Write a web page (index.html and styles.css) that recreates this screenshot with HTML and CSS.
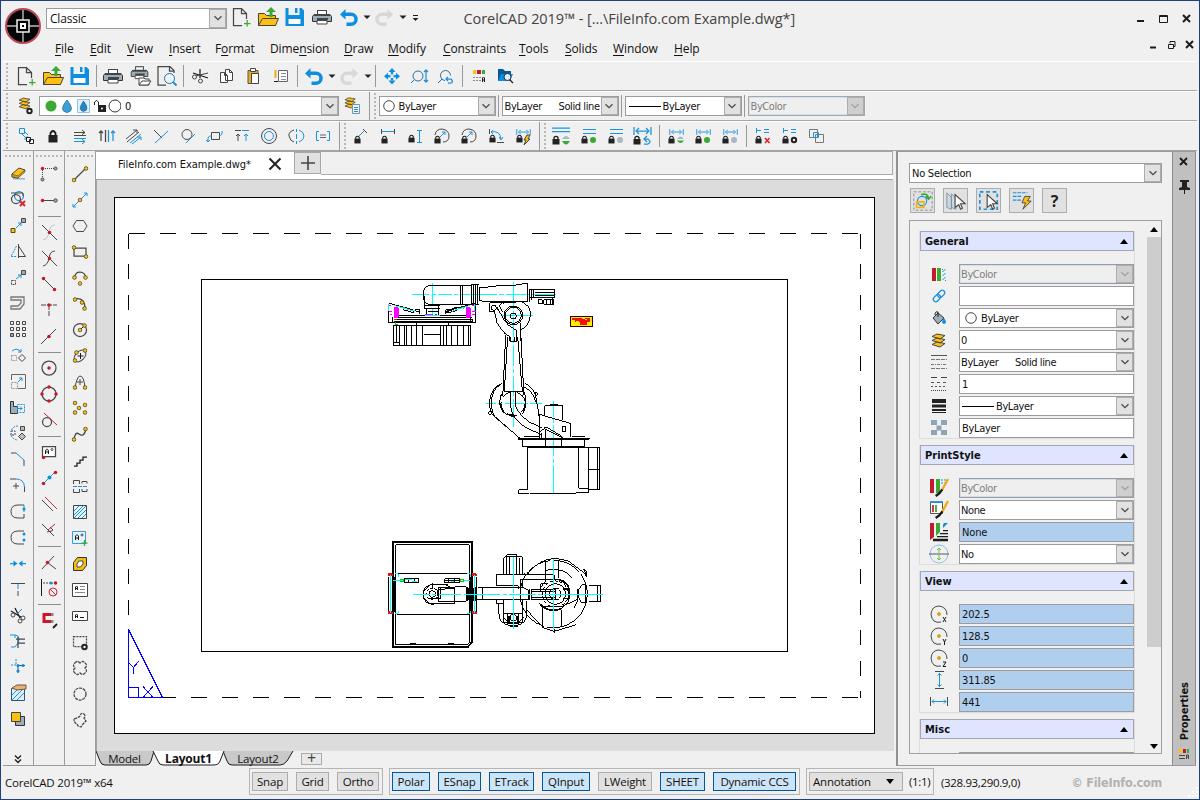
FILE: index.html
```html
<!DOCTYPE html>
<html lang="en">
<head>
<meta charset="utf-8">
<title>CorelCAD 2019</title>
<link rel="stylesheet" href="styles.css">
</head>
<body>
<svg class="defs" width="0" height="0">
<defs>
<symbol id="new" viewBox="0 0 24 24"><path class="s15" d="M13 20.500H4.500V3.500h8l5 5V14M12.500 3.500v5H18"/><path class="g s15" d="M15 18.500h6.500M18.200 15v6.500"/></symbol>
<symbol id="open" viewBox="0 0 24 24"><path class="s fy" d="M2.500 8.500h6l2 2h9v10h-17z"/><path class="fy s" d="M2.500 20.500l4-7h16l-3 7z"/><path class="fg" d="M15 2l5 5h-3.500v5h-3V7H10z"/></symbol>
<symbol id="save" viewBox="0 0 24 24"><path class="fb" d="M2.500 3h3v7h11V3h2L21 5.500V21H2.500z"/><path class="fb" d="M12 3h2.500v5H12z"/><path class="fw" d="M5.500 14h12v5h-12z"/></symbol>
<symbol id="print" viewBox="0 0 24 24"><path class="fs" d="M7 5h10v4H7z"/><path class="s fw" d="M7.500 9V5.500h9V9"/><path class="steel" d="M4 9.500h16l1.500 2v5h-19v-5z"/><path class="fs" d="M4 9h16v2H4zM7 13h11v2H7z"/><path class="fw s" d="M7 15.500h10v3.500H7z"/></symbol>
<symbol id="undo" viewBox="0 0 24 24"><path class="fb" d="M8.500 4v3.500H14a6.500 6.500 0 010 13.500H9.500v-3.500H14a3 3 0 000-6.500H8.500v3.500L3 9.500z"/></symbol>
<symbol id="redo" viewBox="0 0 24 24"><path fill="#d8d8d8" stroke="none" d="M14.500 4v3.500H9A6.500 6.500 0 009 21h4.500v-3.500H9A3 3 0 019 11h5.500v3.500l5.500-5z"/></symbol>
<symbol id="arr" viewBox="0 0 10 24"><path class="fk" d="M1.500 10.500h7L5 14z"/></symbol>
<symbol id="lock" viewBox="0 0 8 10"><path class="fk" d="M.5 4h7v5.500h-7z"/><path class="k s15" d="M2 4V2.500q2-2.500 4 0V4"/></symbol>
<symbol id="dot" viewBox="0 0 6 6"><circle class="yd" cx="3" cy="3" r="2.200"/></symbol>
<symbol id="rd" viewBox="0 0 6 6"><circle class="fr" cx="3" cy="3" r="2.100"/></symbol>
<symbol id="chev" viewBox="0 0 16 18"><path d="M4 7l4 4 4-4" stroke-width="1.400"/></symbol>
<symbol id="layers" viewBox="0 0 24 24"><path class="fy s" d="M5 16.500l5-2.500 8 1.500-5 3.500zM5 12.500l5-2.500 8 1.500-5 3.500zM5 8.500L10 6l8 1.500-5 3.500z"/></symbol>
<symbol id="dimh" viewBox="0 0 16 8"><path class="b" d="M.8 1v6M15.200 1v6M4 4h8M5 2L2.500 4 5 6M11 2l2.500 2L11 6"/></symbol>
<symbol id="pen" viewBox="0 0 20 20"><path stroke="#f5a81c" stroke-width="2.500" d="M19 1l-6 11"/><path class="k" stroke-width="2.500" d="M13 12l-3 4-4 3"/></symbol>
</defs>
</svg>

<div class="app">
<header class="top">
  <svg class="logo" viewBox="0 0 38 38"><circle cx="19" cy="19" r="17" fill="#050505" stroke="#b84a58" stroke-width="2"/><path stroke="#bbb" stroke-width="1.400" d="M19 3v10M19 25v10M3 19h10M25 19h10"/><path stroke="#eee" stroke-width="1.500" d="M13 13h12v12H13z"/><path stroke="#fff" stroke-width="2" d="M17 17h4v4h-4z"/></svg>
  <div class="topmain">
    <div class="titlebar">
      <div class="combo classic"><span>Classic</span><i><svg><use href="#chev"/></svg></i></div>
      <svg class="ic"><use href="#new"/></svg><svg class="ic"><use href="#open"/></svg><svg class="ic"><use href="#save"/></svg><svg class="ic"><use href="#print"/></svg><svg class="ic"><use href="#undo"/></svg><svg class="ar"><use href="#arr"/></svg><svg class="ic"><use href="#redo"/></svg><svg class="ar"><use href="#arr"/></svg><svg class="ic more" viewBox="0 0 24 24"><path class="k" d="M9 10.500h5"/><path class="fk" d="M8.500 13h6l-3 3z"/></svg>
      <div class="title">CorelCAD 2019™ - [...\FileInfo.com Example.dwg*]</div>
      <svg class="win" viewBox="0 0 60 24"><path class="k" stroke-width="2" d="M2 15h7M48 9l7 7M55 9l-7 7"/><path class="k" d="M24.500 9.500h8v7h-8zM24 10.500h9"/></svg>
    </div>
    <nav class="menu">
      <span class="m1"><u>F</u>ile</span><span class="m2"><u>E</u>dit</span><span class="m3"><u>V</u>iew</span><span class="m4"><u>I</u>nsert</span><span class="m5">F<u>o</u>rmat</span><span class="m6">Dime<u>n</u>sion</span><span class="m7"><u>D</u>raw</span><span class="m8"><u>M</u>odify</span><span class="m9"><u>C</u>onstraints</span><span class="m10"><u>T</u>ools</span><span class="m11"><u>S</u>olids</span><span class="m12"><u>W</u>indow</span><span class="m13"><u>H</u>elp</span>
      <svg class="win" viewBox="0 0 60 24"><path class="k" stroke-width="2" d="M13 14.500h6M49 8l7 7M56 8l-7 7"/><path class="k" d="M31.500 11.500h5v4h-5zM33 10.500V8.500h5v5h-1"/></svg>
    </nav>
  </div>
</header>

<div class="bar">
  <b class="grip"></b>
  <svg class="ic"><use href="#new"/></svg><svg class="ic"><use href="#open"/></svg><svg class="ic"><use href="#save"/></svg>
  <b class="sep"></b>
  <svg class="ic"><use href="#print"/></svg>
  <svg class="ic" viewBox="0 0 24 24"><use href="#print" x="1" y="-2" width="21" height="21"/><path class="s fw" d="M11 14h5l1 1h4v6H11z"/><path class="s fw" d="M11 21l3-4h9l-3 4z"/></svg>
  <svg class="ic" viewBox="0 0 24 24"><path class="s15" d="M11 21H3V2.500h12l4 4V9M14.500 2.500V7H19"/><circle class="nb" cx="14.500" cy="14.500" r="5" fill="#eaf4fb"/><path class="b" stroke-width="2" d="M18 18l3.500 3.500"/></svg>
  <b class="sep"></b>
  <svg class="ic" viewBox="0 0 24 24"><path class="k s15" d="M12 5v9M5 9l15 5"/><circle cx="6.500" cy="13" r="2"/><circle cx="12.500" cy="17" r="2"/><path class="s15" d="M8 12l12-3"/></svg>
  <svg class="ic" viewBox="0 0 24 24"><path class="s fw" d="M10.500 5.500h4l3 3v8h-7zM5.500 8.500h4l3 3v7h-7z"/><path d="M14.500 5.500v3h3M9.500 8.500v3h3"/></svg>
  <svg class="ic" viewBox="0 0 24 24"><path fill="#e8ae23" stroke="#555" d="M6 6.500h10v13H6z"/><path class="s fw" d="M9.500 9.500h7v10h-7zM8.500 4.500h5v3h-5z"/></svg>
  <svg class="ic" viewBox="0 0 24 24"><path class="fw" stroke="#667" d="M9.500 6.500h9v11h-9z"/><path stroke="#889" d="M12 9.500h5M12 12.500h5M12 15.500h5"/><path stroke="#f5a81c" stroke-width="2" d="M6.500 6v8"/><path class="k" d="M5 17.500h4"/></svg>
  <b class="sep"></b>
  <svg class="ic"><use href="#undo"/></svg><svg class="ar"><use href="#arr"/></svg><svg class="ic"><use href="#redo"/></svg><svg class="ar"><use href="#arr"/></svg>
  <b class="sep"></b>
  <svg class="ic" viewBox="0 0 24 24"><path class="fb" d="M12 4l3.500 4h-7zM12 20.500l3.500-4h-7zM4 12.200l4-3.500v7zM20 12.200l-4-3.500v7z"/><path class="b" stroke-width="2.500" d="M12 8v2.500M12 14v2.500M8 12.200h2.500M13.500 12.200H16"/></svg>
  <svg class="ic" viewBox="0 0 24 24"><circle class="nb" cx="11" cy="12" r="5"/><path class="nb" d="M7.500 15.500L4 19"/><path class="b s15" d="M19 7v10M17 8l2-2 2 2M17 16l2 2 2-2"/></svg>
  <svg class="ic" viewBox="0 0 24 24"><path class="nb" d="M11 16.500a5 5 0 115.500-5M8 15l-4 4"/><path class="b s15" d="M14 13l-2 2 2 2M12 15h5q3 3 0 4h-3"/></svg>
  <b class="sep"></b>
  <svg class="ic" viewBox="0 0 24 24"><path class="fy" d="M6 6h3v4H6z"/><path class="fr" d="M10 6h4v4h-4z"/><path class="fg" d="M15 6h3v4h-3z"/><path stroke="#888" stroke-dasharray="2 1" d="M6 13.500h8M6 16.500h8"/><path class="k" d="M15.500 18v-4q1-2 2 0v4M15.500 16h2"/></svg>
  <svg class="ic" viewBox="0 0 24 24"><path fill="#065a94" stroke="none" d="M4 5h5l2 2h6v10H4z"/><path class="fb" d="M4 17l3-7h12l-3 7z"/><circle cx="13.500" cy="13" r="3.500" fill="#def" stroke="#234"/><path class="k s15" d="M16 16l3 3"/></svg>
</div>

<div class="bar bar2">
  <b class="grip"></b>
  <svg class="ic" viewBox="0 0 24 24"><use href="#layers" x="0" y="-1" width="22" height="20"/><circle cx="15.500" cy="17" r="2.200" stroke="#222" stroke-width="2" fill="#fff"/></svg>
  <div class="combo layer"><span class="licons"><svg viewBox="0 0 78 20" width="78" height="20"><circle cx="8" cy="10" r="5.500" fill="#3aaa35" stroke="none"/><path fill="#3a9fd8" stroke="#4682a0" d="M24 4q9 11 0 12.500Q15 15 24 4z"/><path fill="#def0fb" stroke="#89c5ec" d="M34.500 3.500h12v13h-12z"/><path fill="#2186c4" stroke="#357" stroke-width=".6" d="M40.500 5q7 9 0 10.500Q34 14 40.500 5z"/><path d="M51.500 9V6q2-3 4 0v4" stroke="#222"/><path class="fk" d="M55 9h8v7h-8z"/><circle cx="59" cy="12.500" r="1" fill="#fff" stroke="none"/><circle cx="72" cy="10" r="6" fill="#fff" stroke="#333"/></svg></span><span>0</span><i><svg><use href="#chev"/></svg></i></div>
  <svg class="ic" viewBox="0 0 24 24"><use href="#layers" x="-1" y="-1" width="21" height="19"/><path fill="#e8f2f8" stroke="#6f97b0" d="M11.500 10.500h7v9h-7z"/><path stroke="#48a" d="M13 13.500h4M13 15.500h4M13 17.500h4"/></svg>
  <b class="sep tall"></b><b class="grip g2"></b>
  <div class="combo c117"><svg class="circ" viewBox="0 0 14 14"><circle cx="7" cy="7" r="5.300" fill="#fff"/></svg><span>ByLayer</span><i><svg><use href="#chev"/></svg></i></div><b class="sep"></b>
  <div class="combo c117"><span class="lt">ByLayer</span><span>Solid line</span><i><svg><use href="#chev"/></svg></i></div><b class="sep"></b>
  <div class="combo c117"><b class="line"></b><span>ByLayer</span><i><svg><use href="#chev"/></svg></i></div><b class="sep"></b>
  <div class="combo c117 dis"><span>ByColor</span><i><svg><use href="#chev"/></svg></i></div>
</div>

<div class="bar bar3">
  <b class="grip"></b>
  <svg class="ic" viewBox="0 0 24 24"><path class="b" d="M5.500 4.500h5v5h-5zM8 10l5 5M11 8l3 3M13 12v3h-3"/><path class="k" d="M12.500 13.500h4v4h-4zM15.500 15.500h4v4h-4z" fill="#fff"/></svg>
  <svg class="ic" viewBox="0 0 24 24"><path class="fk" d="M7.500 11h9v7.500h-9z"/><path class="k s2" d="M9.500 11V9q2.500-4 5 0v2"/></svg>
  <svg class="ic" viewBox="0 0 24 24"><path d="M6 8.500h11M14 6l3 2.500-3 2M6 11.500h12"/><path class="b" d="M6 14.500h12M6 17.500h11M14 15l3 2.500-3 2.500"/></svg>
  <svg class="ic" viewBox="0 0 24 24"><path class="s15" d="M6 17V8M4 9l2-2 2 2M10.500 6v12"/><path class="b s15" d="M13.500 6v12M18 17V8M16 9l2-2 2 2"/></svg>
  <svg class="ic" viewBox="0 0 24 24"><path d="M4 15L15 6M11 6h4v3M5 18L17 8"/><path class="b" d="M8 19l11-9M10 20l9-7M15 13h4v3"/></svg>
  <svg class="ic" viewBox="0 0 24 24"><path d="M5 6l8 8"/><path class="b" d="M6 19L19 7"/></svg>
  <svg class="ic" viewBox="0 0 24 24"><circle cx="11" cy="10.500" r="5"/><path class="b" d="M10 19l9-9"/></svg>
  <svg class="ic" viewBox="0 0 24 24"><path d="M8.500 8.500h8v7h-8z"/><path class="b" d="M5 18q-1-7 4-6M16 12q4-1 3-5M3 16l2 2 2-2"/></svg>
  <svg class="ic" viewBox="0 0 24 24"><path d="M5 6.500h6M8 17v-7M6 12l2-2 2 2"/><path class="b" d="M12 6.500h7M16 17v-7M14 12l2-2 2 2"/></svg>
  <svg class="ic" viewBox="0 0 24 24"><circle cx="12" cy="12" r="7.500"/><circle class="b" cx="12" cy="12" r="4.500"/></svg>
  <svg class="ic" viewBox="0 0 24 24"><path d="M10 6q-6 2-5 6 1 5 5 6"/><path class="b" d="M15 6q5 2 5 6t-5 6M12.500 5v3M12.500 10v5M12.500 17v3"/></svg>
  <svg class="ic" viewBox="0 0 24 24"><path class="b" d="M8 7.500H5.500v9H8M16 7.500h2.500v9H16"/><path stroke="#667" d="M9 11h6M9 13.500h6"/></svg>
  <b class="sep tall"></b><b class="grip g2"></b>
  <svg class="ic" viewBox="0 0 24 24"><use href="#lock" x="5" y="11" width="7" height="9"/><path class="b" d="M10 12l6-6"/><path d="M14 5l4 4"/></svg>
  <svg class="ic" viewBox="0 0 24 24"><use href="#lock" x="5" y="11" width="7" height="9"/><path d="M5.500 5v5M18.500 5v5"/><path class="b" d="M6 7.500h12"/></svg>
  <svg class="ic" viewBox="0 0 24 24"><use href="#lock" x="5" y="10" width="7" height="9"/><path class="b" d="M14 6.500h5M16.500 6v12M14 18.500h5"/></svg>
  <svg class="ic" viewBox="0 0 24 24"><use href="#lock" x="4" y="11" width="7" height="9"/><path d="M5 11q1-6 7-6 7 1 7 7t-6 6"/><path class="b" d="M10 13l5-5M12 8h3v3"/></svg>
  <svg class="ic" viewBox="0 0 24 24"><use href="#lock" x="4" y="11" width="7" height="9"/><path d="M5 11q1-6 7-6 7 1 7 7t-6 6"/><path class="b" d="M9 14l6-6M12 8h3v3"/></svg>
  <svg class="ic" viewBox="0 0 24 24"><use href="#lock" x="5" y="10" width="7" height="9"/><path d="M5.500 5v5M13 18.500h7"/><path class="b" d="M7 8q9-2 10 7M9 6L7 8l2 2M15 13l2 3 2-3"/></svg>
  <svg class="ic" viewBox="0 0 24 24"><use href="#dimh" x="5" y="4" width="15" height="8"/><use href="#lock" x="5" y="10" width="7" height="9"/><path class="fy s" stroke-width=".5" d="M16 11h3l-2 4h2l-6 6 2-5h-2z"/></svg>
  <b class="sep tall"></b><b class="grip g2"></b>
  <svg class="ic" viewBox="0 0 24 24"><path class="b s15" d="M2 4h18M2 7.500h18"/><use href="#lock" x="2" y="11" width="8" height="10"/><path class="fg" d="M12 17h8q-4 7-8 0"/><path fill="#a9b9c2" stroke="none" d="M12 15h8q-4-6-8 0"/></svg>
  <svg class="ic" viewBox="0 0 24 24"><path class="b" d="M6 5.500h13M6 9.500h13"/><use href="#lock" x="4" y="11" width="7" height="9"/><circle class="fg" cx="16" cy="16" r="3"/></svg>
  <svg class="ic" viewBox="0 0 24 24"><path class="b" d="M6 5.500h13M6 9.500h13"/><use href="#lock" x="4" y="11" width="7" height="9"/><circle fill="#a9b9c2" stroke="none" cx="16" cy="16" r="3"/></svg>
  <svg class="ic" viewBox="0 0 24 24"><path class="b s15" d="M3 3v8M20 3v8M6 7h11M8 4L5 7l3 3M15 4l3 3-3 3M16 12l-3 3 3 3M13 15h4q4 3 0 5h-4"/><use href="#lock" x="2" y="11" width="8" height="10"/></svg>
  <b class="sep"></b>
  <svg class="ic" viewBox="0 0 24 24"><use href="#dimh" x="5" y="4" width="15" height="8"/><use href="#lock" x="4" y="11" width="7" height="9"/><path class="fg" d="M13 16.500h7q-3.500 5-7 0"/><path fill="#a9b9c2" stroke="none" d="M13 15h7q-3.500-5-7 0"/></svg>
  <svg class="ic" viewBox="0 0 24 24"><use href="#dimh" x="5" y="4" width="15" height="8"/><use href="#lock" x="4" y="11" width="7" height="9"/><circle class="fg" cx="16" cy="16" r="3"/></svg>
  <svg class="ic" viewBox="0 0 24 24"><use href="#dimh" x="5" y="4" width="15" height="8"/><use href="#lock" x="4" y="11" width="7" height="9"/><circle fill="#a9b9c2" stroke="none" cx="16" cy="16" r="3"/></svg>
  <b class="sep"></b>
  <svg class="ic" viewBox="0 0 24 24"><path class="b" d="M5.500 4v5M5 6.500h5M13 5.500h5M13 8.500h5"/><use href="#lock" x="4" y="11" width="7" height="9"/><path stroke="#e0222c" stroke-width="1.600" d="M14 14l4.500 5M18.500 14L14 19"/></svg>
  <svg class="ic" viewBox="0 0 24 24"><path class="b" d="M5.500 4v5M5 6.500h5M13 5.500h5M13 8.500h5"/><use href="#lock" x="4" y="11" width="7" height="9"/><circle cx="16" cy="16" r="2.200" stroke="#222" stroke-width="2"/></svg>
  <svg class="ic" viewBox="0 0 24 24"><path stroke="#777" d="M4.500 5.500h8v8h-8zM10.500 10.500h8v8h-8z"/><path class="b" d="M8.500 8.500h5v5h-5z"/></svg>
</div>

<div class="main">
  <div class="tools">
    <b class="hgrip"></b>
    <svg class="tl" viewBox="0 0 24 24"><path fill="#8fb4cf" stroke="none" d="M7 17h12v1.500H7z"/><path class="fy s" d="M6 13l7-6 6 2-7 8-6-1z"/><path fill="#d89a10" stroke="#333" stroke-width=".5" d="M6 13l6 2 7-6v2l-7 6-6-1z"/></svg>
    <svg class="tl" viewBox="0 0 24 24"><circle class="b s15" cx="13" cy="9" r="4.500"/><circle class="s15" cx="10" cy="12" r="4.500"/><path d="M5 6h12v3"/><path stroke="#e0222c" stroke-width="2" d="M14 14l5 5M19 14l-5 5"/></svg>
    <svg class="tl" viewBox="0 0 24 24"><path class="yd" d="M5 15.500h4v4H5z"/><path fill="#aaa" d="M15.500 5.500h4v4h-4z"/><path class="b" d="M10 15l5-5M12 10h3v3"/></svg>
    <svg class="tl" viewBox="0 0 24 24"><path class="b" stroke-dasharray="2 1" d="M10.500 7L5 17.500h5.500"/><path d="M12.500 5v14M12.500 7l7 10.500h-7z"/></svg>
    <svg class="tl" viewBox="0 0 24 24"><path stroke-dasharray="2 1" d="M5.500 15.500h4v4h-4z"/><path fill="#aaa" d="M15.500 5.500h4v4h-4z"/><path class="b" d="M10 14l5-4M12 10h3v3"/></svg>
    <svg class="tl" viewBox="0 0 24 24"><path stroke="#777" stroke-width="1.300" d="M5 6h13v7l-4 5H5v-3h7l3-3V9H5z"/></svg>
    <svg class="tl" viewBox="0 0 24 24"><path d="M4.500 4.500h3v3h-3zM10.500 4.500h3v3h-3zM16.500 4.500h3v3h-3zM4.500 10.500h3v3h-3zM10.500 10.500h3v3h-3zM16.500 10.500h3v3h-3zM10.500 16.500h3v3h-3zM16.500 16.500h3v3h-3z"/><path fill="#9ab" d="M4.500 16.500h3v3h-3z"/></svg>
    <svg class="tl" viewBox="0 0 24 24"><path class="b" d="M6 8q5-4 9 1M15 6v3h-3"/><path stroke="#999" stroke-dasharray="2 1" d="M5.500 12.500h5v5h-5z"/><path d="M16 11.500l3.500 3.500-3.500 3.500-3.500-3.500z"/></svg>
    <svg class="tl" viewBox="0 0 24 24"><path stroke="#666" d="M5.500 11V5.500h14v14H12"/><path stroke="#999" stroke-dasharray="2 1" d="M5.500 13.500h6v6h-6z"/><path class="b" d="M12 13l4-4M13 9h3v3"/></svg>
    <svg class="tl" viewBox="0 0 24 24"><path class="steel" d="M4.500 6.500h3v5h4v7h-7z"/><path class="b" stroke-dasharray="2 1" d="M11.500 9.500h7v8h-7z"/><path class="b" d="M11 13.500h5M14 11.500l2 2-2 2"/></svg>
    <svg class="tl" viewBox="0 0 24 24"><path fill="#bbb" d="M14.500 5.500h4v4h-4zM16 12l3.500 3.500L16 19l-3.500-3.500z"/><path class="b" stroke-dasharray="2 1" d="M12 5q-5 0-7 5M5 14q2 5 7 5"/><path stroke-dasharray="2 1" d="M5 10h4v4H5z"/></svg>
    <svg class="tl" viewBox="0 0 24 24"><path d="M5 6h5M18 13v6"/><path class="b" d="M10 6l8 7"/></svg>
    <svg class="tl" viewBox="0 0 24 24"><path d="M4 6h6M18.500 14v5M10 10v6M7 13h6"/><path class="b" d="M10 6q8 0 8.500 8"/></svg>
    <svg class="tl" viewBox="0 0 24 24"><path d="M18 6h-6q-7 0-7 6.500T12 19h6v-4"/><path class="b" d="M18 6v7"/><circle class="fb" cx="18" cy="10" r="1.500"/></svg>
    <svg class="tl" viewBox="0 0 24 24"><path d="M18 6h-6q-7 0-7 6.500T12 19h6"/><circle class="fb" cx="18" cy="9" r="1.500"/><circle class="fb" cx="18" cy="15" r="1.500"/></svg>
    <svg class="tl" viewBox="0 0 24 24"><path class="b s15" d="M4 12.500h4M16 12.500h4"/><path class="fb" d="M7.500 9.500l4 3-4 3zM16.500 9.500l-4 3 4 3z"/></svg>
    <svg class="tl" viewBox="0 0 24 24"><path d="M5 6.500h14"/><path class="b" d="M12 7v5"/><path d="M12 14v5"/></svg>
    <svg class="tl" viewBox="0 0 24 24"><path class="k s15" d="M9 5l5 10M5 8l10 6"/><path class="b" d="M16 6l-5 5"/><circle cx="7" cy="12" r="2"/><circle cx="14" cy="18" r="2"/><circle cx="17" cy="15" r="2"/></svg>
    <svg class="tl" viewBox="0 0 24 24"><path class="b" d="M4 6h5q4 0 4 4t-4 8H5M9 6v3"/><path class="s15" d="M10 10h9M12 14h7M12 8v11"/></svg>
    <svg class="tl" viewBox="0 0 24 24"><path class="b" stroke-dasharray="2 1" d="M10 4v6H5"/><path d="M12 10.500h7M12 10v8"/><circle class="fb" cx="12" cy="10.500" r="1.600"/><circle class="fb" cx="17" cy="10.500" r="1.600"/><circle class="fb" cx="12" cy="16" r="1.600"/></svg>
    <svg class="tl" viewBox="0 0 24 24"><path fill="#ddf0fb" stroke="#356" d="M5.500 7.500h13v12h-13z"/><path class="b" d="M6 14l6-6M6 19l11-11M11 19l7-7"/><path fill="#e9b17b" stroke="#754" d="M6 7l5-3h9v4l-9 1z"/></svg>
    <svg class="tl" viewBox="0 0 24 24"><path class="steel" d="M9.500 9.500h9v9h-9z"/><path class="fy s" d="M5.500 5.500h9v9h-9z"/></svg>
    <svg class="expand" viewBox="0 0 24 24"><path class="k s15" d="M9 7.500l3 3 3-3M9 11.500l3 3 3-3"/></svg>
  </div>
  <div class="tools">
    <b class="hgrip"></b>
    <svg class="tl" viewBox="0 0 24 24"><path stroke-dasharray="1 1" d="M6 6.500h13M5.500 6v12"/><use href="#rd" x="3" y="4" width="5" height="5"/><circle fill="#aaa" cx="18.500" cy="6.500" r="1.500"/><circle fill="#aaa" cx="5.500" cy="17.500" r="1.500"/></svg>
    <svg class="tl" viewBox="0 0 24 24"><path d="M6 12.500h13"/><use href="#rd" x="3" y="10" width="5" height="5"/><circle fill="#aaa" cx="18.500" cy="12.500" r="1.700"/></svg>
    <b class="hsep"></b>
    <svg class="tl" viewBox="0 0 24 24"><path stroke="#b8c8d0" d="M18 5q-5 0-6 7t-6 8"/><path d="M5 5l15 15"/><use href="#rd" x="10" y="10" width="5" height="5"/></svg>
    <svg class="tl" viewBox="0 0 24 24"><path d="M18 5q-5 0-6 7t-6 8M5 5l15 15"/><use href="#rd" x="10" y="10" width="5" height="5"/></svg>
    <svg class="tl" viewBox="0 0 24 24"><path d="M6 6l12 12"/><use href="#rd" x="4" y="4" width="5" height="5"/><use href="#rd" x="15" y="15" width="5" height="5"/></svg>
    <svg class="tl" viewBox="0 0 24 24"><path d="M4 7h16M12 7v12" stroke-dasharray="5 1"/><use href="#rd" x="9.500" y="4.500" width="5" height="5"/></svg>
    <svg class="tl" viewBox="0 0 24 24"><path d="M4 20L19 5"/><use href="#rd" x="9.500" y="10" width="5" height="5"/></svg>
    <b class="hsep"></b>
    <svg class="tl" viewBox="0 0 24 24"><circle class="s15" cx="12" cy="12" r="7"/><use href="#rd" x="9.500" y="9.500" width="5" height="5"/></svg>
    <svg class="tl" viewBox="0 0 24 24"><circle class="s15" cx="12" cy="12" r="7"/><use href="#rd" x="9.500" y="2.500" width="5" height="5"/><use href="#rd" x="2.500" y="9.500" width="5" height="5"/><use href="#rd" x="16.500" y="9.500" width="5" height="5"/><use href="#rd" x="9.500" y="16.500" width="5" height="5"/></svg>
    <svg class="tl" viewBox="0 0 24 24"><circle class="s15" cx="10" cy="14" r="4.500"/><path class="rr" d="M7 5l13 12"/></svg>
    <b class="hsep"></b>
    <svg class="tl" viewBox="0 0 24 24"><path class="s15" d="M5.500 6.500h13v10h-13z" fill="#fff"/><path class="k" d="M8.500 14v-3q1.500-4 3 0v3M9 12h3"/><circle cx="15" cy="9.500" r="1"/><use href="#rd" x="4" y="15" width="5" height="5"/></svg>
    <svg class="tl" viewBox="0 0 24 24"><path class="b" d="M7 17L18 6"/><circle class="fb" cx="12.500" cy="11.500" r="2"/><use href="#rd" x="4" y="15" width="5" height="5"/><use href="#rd" x="16" y="4" width="5" height="5"/></svg>
    <svg class="tl" viewBox="0 0 24 24"><path d="M5 8l11 11"/><path class="rr" d="M8 5l12 12"/></svg>
    <svg class="tl" viewBox="0 0 24 24"><path d="M5 6l12 12M10 14l4-1M13 9l3 3-3 2"/><path class="rr" d="M11 12l7-6"/></svg>
    <b class="hsep"></b>
    <svg class="tl" viewBox="0 0 24 24"><path d="M17 6L5 19M11 13l8 6"/><use href="#rd" x="8" y="10" width="5" height="5"/></svg>
    <svg class="tl" viewBox="0 0 24 24"><path class="k" d="M4.500 3v17"/><path stroke-dasharray="2 1" d="M6 7h10"/><circle class="fb" cx="14" cy="7" r="1.500"/><use href="#rd" x="16" y="4.500" width="5" height="5"/><circle class="rr" cx="16" cy="16" r="4"/><path class="rr" d="M13 13l6 6"/></svg>
    <b class="hsep"></b>
    <svg class="tl" viewBox="0 0 24 24"><path stroke="#cc1526" stroke-width="3" d="M14 6.500H7v7h7"/><path stroke="#888" stroke-width="3" d="M14 6.500h2.500M14 13.500h2.500"/><path class="k s2" d="M16 20l4-4"/></svg>
  </div>
  <div class="tools t3">
    <b class="hgrip"></b>
    <svg class="tl" viewBox="0 0 24 24"><path class="s15" d="M6 18L18 6"/><use href="#dot" x="3.500" y="15.500" width="5" height="5"/><use href="#dot" x="15.500" y="4" width="5" height="5"/></svg>
    <svg class="tl" viewBox="0 0 24 24"><path class="b" d="M5 19L19 5M16 5h3v3M5 16v3h3"/><use href="#dot" x="9.500" y="9.500" width="5" height="5"/></svg>
    <svg class="tl" viewBox="0 0 24 24"><path d="M8.500 6.500h7l3.500 5.500-3.500 5.500h-7L5 12z"/></svg>
    <svg class="tl" viewBox="0 0 24 24"><path class="s15" d="M6 8h12v8H6z"/><use href="#dot" x="3.500" y="5" width="5" height="5"/><use href="#dot" x="15.500" y="14" width="5" height="5"/></svg>
    <svg class="tl" viewBox="0 0 24 24"><path class="s15" d="M7 11q0-5 5-5t6 6"/><use href="#dot" x="4" y="9" width="5" height="5"/><use href="#dot" x="15" y="9" width="5" height="5"/><use href="#dot" x="9.500" y="15" width="5" height="5"/></svg>
    <svg class="tl" viewBox="0 0 24 24"><path class="s15" d="M7 7q10-2 10 10"/><use href="#dot" x="4.500" y="5" width="5" height="5"/><use href="#dot" x="11.500" y="8" width="5" height="5"/><use href="#dot" x="14" y="14" width="5" height="5"/></svg>
    <svg class="tl" viewBox="0 0 24 24"><circle class="s15" cx="12" cy="12" r="6.500"/><path class="k" d="M12 12l5-5"/><use href="#dot" x="9.500" y="9.500" width="5" height="5"/><use href="#dot" x="14" y="5" width="5" height="5"/></svg>
    <svg class="tl" viewBox="0 0 24 24"><ellipse cx="12" cy="12" rx="7" ry="4.500" transform="rotate(-45 12 12)"/><path class="k" d="M12.500 9v6M9.500 12h6"/><use href="#dot" x="14.500" y="4" width="5" height="5"/><use href="#dot" x="6" y="6" width="5" height="5"/><use href="#dot" x="4.500" y="14" width="5" height="5"/></svg>
    <svg class="tl" viewBox="0 0 24 24"><path d="M7 18Q9 6 12 6q4 0 5 12M12 9v6M9 12h6"/><use href="#dot" x="4.500" y="15" width="5" height="5"/><use href="#dot" x="14.500" y="15" width="5" height="5"/></svg>
    <svg class="tl" viewBox="0 0 24 24"><use href="#dot" x="4.500" y="4.500" width="5" height="5"/><use href="#dot" x="14.500" y="6.500" width="5" height="5"/><use href="#dot" x="8.500" y="9.500" width="5" height="5"/><use href="#dot" x="4.500" y="14" width="5" height="5"/><use href="#dot" x="14.500" y="14" width="5" height="5"/></svg>
    <svg class="tl" viewBox="0 0 24 24"><path class="s15" d="M6 18q1-9 5-6 5 4 7-5"/><use href="#dot" x="3.500" y="15" width="5" height="5"/><use href="#dot" x="15" y="4.500" width="5" height="5"/></svg>
    <svg class="tl" viewBox="0 0 24 24"><path class="k s15" d="M6 18h3v-3h3v-3h3V9h4"/></svg>
    <svg class="tl" viewBox="0 0 24 24"><path d="M5.500 10V6.500h6V10M5.500 15v3.500h6V15M14 9.500v-2h5v2M14 15v2.500h5V15"/><path class="b" stroke-dasharray="4 1" d="M5 12.500h14"/></svg>
    <svg class="tl" viewBox="0 0 24 24"><path fill="#e6f4fc" stroke="#444" d="M5.500 5.500h13v13h-13z"/><path class="b" d="M6 11l5-5M6 15l9-9M6 18L18 6M10 18l8-8M14 18l4-4"/></svg>
    <svg class="tl" viewBox="0 0 24 24"><path fill="#e6f4fc" stroke="#3a9fd8" d="M4.500 5.500h13v12h-13z"/><path class="k" d="M7.500 14v-4q1.500-3 3 0v4M8 12h2"/><circle cx="14" cy="9" r="1"/><path class="g s15" d="M13.500 17h6M16.500 14v6"/></svg>
    <svg class="tl" viewBox="0 0 24 24"><path fill="#f5bd12" stroke="#333" d="M9.500 5.500h9v8l-4 5h-9v-8z"/><path fill="#fff" d="M11 9h4v3l-2.500 3H9v-3z"/></svg>
    <svg class="tl" viewBox="0 0 24 24"><path class="s fw" d="M4.500 5.500h15v13h-15z"/><path class="k" d="M7.500 12V9q1-2 2 0v3M7.500 10.500h2"/><path stroke="#888" d="M12 8.500h5M12 11.500h5M7 14.500h10"/></svg>
    <svg class="tl" viewBox="0 0 24 24"><path class="s fw" d="M4.500 7.500h15v9h-15z"/><path class="k" d="M7.500 14v-3q1-2 2 0v3M7.500 12.500h2M12 13.500h4"/></svg>
    <svg class="tl" viewBox="0 0 24 24"><path stroke-dasharray="2 1" class="s15" d="M5.500 6.500h13v10h-13z"/><circle cx="16.500" cy="17" r="2.200" fill="#fff" stroke="#222" stroke-width="2"/></svg>
    <svg class="tl" viewBox="0 0 24 24"><path class="s15" stroke-dasharray="3 .8" d="M7 7q2-3 5 0 3-3 5 0 3 2 0 5 3 3 0 5-2 3-5 0-3 3-5 0-3-2 0-5-3-3 0-5"/></svg>
    <svg class="tl" viewBox="0 0 24 24"><circle class="s15" stroke-dasharray="3 .8" cx="12" cy="12" r="6"/></svg>
    <svg class="tl" viewBox="0 0 24 24"><path class="s15" stroke-dasharray="3 .8" d="M6 11q4-1 6-3 1-4 4-2 2 2 0 4l2 3-3 3-2 3-3-1-1-2q-3-1-3-5"/></svg>
  </div>

  <section class="doc">
    <div class="doctabs">
      <div class="doctab"><span>FileInfo.com Example.dwg*</span><svg viewBox="0 0 14 14"><path stroke="#222" stroke-width="2" d="M1.500 1.500l11 11M12.500 1.500l-11 11"/></svg></div>
      <div class="plus"><svg viewBox="0 0 14 14"><path stroke="#444" stroke-width="1.600" d="M0 7h14M7 0v14"/></svg></div>
      <div class="rest"></div>
    </div>
    <div class="canvas">
      <svg class="sheet" viewBox="114 197 761 537">
        <path class="ink" fill="#fff" d="M114.500 197.500h760v536h-760z"/>
        <path class="ink" stroke-dasharray="16 15" d="M128.500 233.500h733M128.500 697.500h733"/><path class="ink" stroke-dasharray="15 15.500" d="M128.500 233.500v464M860.500 233.500v464"/>
        <path class="ink" d="M201.500 279.500h586v372h-586z"/>
        <path class="ucs" d="M128.500 629.500v68h34zM128.500 687.500h10v10M128.500 662.500l5 5 5-6M133.500 667v7M143 686.500l10 11M153 686.500l-10 11"/>
        <g class="cad" transform="translate(375 270) scale(.333333)">
          <path class="cy" d="M112 73h50M170 73h12M190 73h40M238 73h12M255 73h110M372 73h14M392 73h70M470 73h72M172 38v70M172 114v20M415 36v80M415 124v10M415 140v60M415 207v12M415 226v62M415 296v14M415 318v60M415 386v10M415 404v66M380 136h94M333 400h30M370 400h12M390 400h70M466 400h36M535 393v48M535 448v12M535 466v92M535 566v12M535 584v86"/>
          <path d="M172 46q-28 0-28 27t20 31M172 46h118M164 104h126M258 46v56M262 46v56M290 43v60M296 43v60M302 43v60M309 43v60M313 52v40M290 43h23M290 103h23M314 54l50-6h40l45-7h10v55H330l-16-6zM465 56v40M470 56v34M475 60v24M465 60h75v22h-75M540 60v24M480 67h60M480 77h60M490 90h12v12h-12zM506 90h30v13h-30zM516 90v13M526 90v13M532 84v20"/>
          <path d="M148 78v30h46M150 108h42v8h-42zM154 116h40M154 116v20M190 116v20M158 124h34M56 142h236M56 154h236M60 150h230M66 138h220M52 148v10M292 148v10M52 158h240M100 154h24v14M220 168v-14h24M55 168h232v58H55zM64 168v50M73 168v58M90 168v58M96 168v58M111 168v58M126 168v58M142 168v58M148 194h50M198 168v58M205 168v58M214 168v58M230 168v58M249 168v58M266 168v58M282 168v58M55 218h20"/>
          <path d="M40 104v54h14v-18M302 104v54h-14v-18M42 100l30 8 30 8 30 10M300 100l-30 8-30 8-30 12M85 111l30 10v7l-28-8zM245 111l-30 12v6l28-7zM120 120h14v12M226 120h-14v12"/>
          <path class="mg" fill="#f0f" d="M58 114h12v28H58zM274 114h12v28h-12zM40 106h8M290 106h12M42 124h10M292 124h10M44 134h8M292 134h8M150 134h24"/><path class="gr" d="M76 112h12v6M258 112h8v6M62 156v8h8"/><path class="cy" d="M56 106l50 14 14 2M286 106l-45 14-10 4M42 102v20M298 102v20M150 138h44"/><path class="rd" d="M56 150h10M180 134h6"/>
          <path d="M345 98v28h14M345 98h78M372 106l10 20M384 96l-8 10M384 100l10-4h48l18 13q8 14 5 36l-8 20-22 18"/><circle cx="415" cy="136" r="28"/><circle cx="415" cy="136" r="24"/><circle cx="415" cy="138" r="9"/><circle cx="356" cy="113" r="8"/>
          <path d="M358 122l8 36 12 18 12 15 16 10v14h20v-32l-24-16-15-17-14-26-8-14M372 124l-8-14M404 200v14h14v-12M392 195l-8 168v14M398 200l-10 164M436 162l5 100 5 100v14M428 200l14 164M388 364h58M438 160v54"/>
          <path d="M380 340q-32 16-36 50-2 35 10 46l82 70M376 344q-28 16-26 56 0 30 10 40l78 68M384 364q-20 37 0 60l10 10h20M378 376q-10 30 8 52M450 340q30 14 34 50l8 44 1 62M444 348q32 18 38 48M446 364q16 35-4 68M442 376q16 24 6 46M406 366v40l6 23 8 15 30 28 50 22M421 366v40l8 16 12 16 22 18 38 18M395 430l18 10 14-4"/>
          <circle cx="346" cy="428" r="5"/><circle cx="484" cy="372" r="4"/><circle cx="414" cy="401" r="36" stroke-dasharray="28 17"/>
          <path d="M510 438v-30h54v42M522 408l5-5h20l4 5M493 432l16 6 77 22v42M564 470h8v14h-10v-14zM493 434v70M493 488l14-12 56 28M508 474l8-2 46 28M430 505h213v3H430zM442 508h188v22H442zM512 480v48M559 500v28M500 490v15M456 532h218v128h-34M458 532v128h-26v12h30M464 671h138M640 532v136h-38M612 532v123h28M667 532v128M640 598h36M446 500h50M590 500h40"/>
          <rect class="rb" x="587" y="140" width="65" height="29" fill="#ffea00"/><path fill="#f01010" stroke="none" d="M591 143h54v12h-8v10h-22v-8h-14v-6h-10z"/><path class="yl" d="M604 155h8v8M620 146h10M636 150h-5M644 165v-10"/>
        </g>
        <g class="cad" transform="translate(375 530) scale(.333333)">
          <path stroke-width="6" d="M54 36h238v300l-14 15H54z"/><path d="M63 44h220v294l-8 7H63zM108 43h14M222 43h14M108 342h14M222 342h14M66 130h220M66 253h220M102 345l6-5h14l5 5M216 345l6-5h14l5 5"/>
          <path d="M40 140v106M47 140v106M54 140v106M294 140v106M299 140v106M304 140v106M58 140v106M288 140v106M72 151h14M88 146h44v12H88zM100 146v12M118 146v12M210 146h44v12h-44zM222 146v12M240 146v12M208 152h50"/>
          <path class="rd" fill="#d11" d="M40 131h12v6H40zM292 131h12v6h-12zM40 245h12v6H40zM292 245h12v6h-12z"/><path class="gr" d="M78 148h8v8h-8zM258 148h8v8h-8z"/><path class="cy" d="M46 136v112M298 136v112M60 132h10v8M276 132h10v8M60 250h10v-6M276 250h10v-6M54 152h30M90 148h20M112 156h14M266 152h20M228 156h10"/>
          <path d="M146 185l22-22h40l30 14M146 202l20 20h74M178 163q-32 0-34 30 2 30 34 30h-10M190 174h50v40h-50zM240 170h34v44h-34zM190 180l50-7M196 174v32h-36M172 160v18M184 178q14 12 0 30M238 212v10h-28M208 163h10"/><circle cx="172" cy="192" r="10"/><circle cx="172" cy="192" r="17" stroke-dasharray="7 5"/>
          <path d="M274 176h8v34h-8M279 172v42M285 172v42M291 174v38M297 174v38M303 172v40M308 172h136l16 8v30H303M322 174v36M444 172v-24M364 135h174v14H436v28M364 135v32h66v10M386 135V84l5-5h48l5 5v51M396 79v-4h30v4M396 79v56M404 79v56M434 84v51M426 80v55M463 178v32M469 178v32M469 180h73M469 184h73M469 202h73M469 208h73M542 178v30"/>
          <path d="M386 210v40h56v-40M366 210v12h20M372 222v30q0 26 28 34h28q28-8 27-34v-40M386 250v28h56v-28M397 250v30h34v-30zM382 260l20 20M448 260l-18 20M404 284v5h24v-5"/><circle cx="415" cy="263" r="10"/><path class="bold" d="M402 258v24M428 258v24"/>
          <circle cx="536" cy="192" r="101" stroke-dasharray="180 8 90 6"/><circle cx="536" cy="192" r="74" stroke-dasharray="90 275" stroke-dashoffset="45"/><path d="M511 93v56M552 93v52M458 132q50-65 124-38l52 40-8-16 8 4 2 18-7-4M504 235v57M560 240v50M497 162h18M497 162v20M497 230h63l48-22v-30M502 292l36 12 66-20M538 298v10M620 164h12v54h-12l-8-14v-26zM641 166h36v50h-36M667 166v50M455 240l50 52M450 130l-8 4M499 170l15-21h38l28 17v50l-22 22-38 2-27-20"/>
          <circle cx="541" cy="192" r="31"/><circle cx="541" cy="192" r="39" stroke-dasharray="10 5"/><circle cx="541" cy="192" r="17"/><path class="bold" d="M565 178h18v28h-18M497 225q20 22 62 12M550 148q24 6 30 22"/>
          <path class="cy" d="M114 193h50M172 193h12M192 193h66M266 193h110M383 193h12M402 193h80M490 193h12M508 193h176M415 80v90M415 178v12M415 198v98M535 88v80M535 176v14M535 198v98"/>
        </g>
      </svg>
    </div>
    <div class="sheettabs">
      <svg class="tabshape" viewBox="0 0 200 15"><path fill="#c9c9c9" d="M0 0l4 10q1 4 5 4h41q4 0 5-4l3-10M127 0l4 10q1 4 5 4h48q4 0 7-4l6-10" class="k"/><path class="k" fill="#fff" d="M57 0l5 10q1 4 5 4h50q6 0 7-4l4-10"/></svg>
      <span class="a">Model</span><span class="bld">Layout1</span><span class="c">Layout2</span><i>+</i>
    </div>
  </section>

  <aside class="props">
    <div class="panel">
      <div class="combo nosel"><span>No Selection</span><i><svg><use href="#chev"/></svg></i></div>
      <div class="btns">
        <button><svg viewBox="0 0 24 24"><path stroke="#889" stroke-dasharray="3 2" d="M2 2h20v20H2z"/><circle class="b s15" cx="11" cy="12" r="5"/><path stroke="#f5b214" stroke-width="1.800" d="M5 13h8v6H5z"/><path class="g s2" d="M10 5q7-2 8 4M15 7l3 3 3-3"/></svg></button>
        <button><svg viewBox="0 0 24 24"><path stroke="#7894a6" fill="#ccd7df" d="M2 3l5 5v13l-5-2zM7 4l5 5v12l-5-2z"/><path class="fw s15" d="M11 5v14l4-3 2 5 2-1-2-5h5z"/></svg></button>
        <button><svg viewBox="0 0 24 24"><path class="b s2" stroke-dasharray="4 3" d="M2 2h19v19H2z"/><path class="fw s15" d="M10 5v14l4-3 2 5 2-1-2-5h5z"/></svg></button>
        <button><svg viewBox="0 0 24 24"><path class="b s15" stroke-dasharray="4 1" d="M2 3h16M2 7h10M2 11h10"/><path class="fy s" d="M15 7h6l-3 5h4l-9 9 3-7h-4z"/></svg></button>
        <button class="q">?</button>
      </div>
      <div class="scroll">
        <div class="groups">
          <div class="group"><h3>General<s></s></h3>
            <div class="row"><svg class="pi" viewBox="0 0 24 24"><path fill="#c31b2b" stroke="none" d="M5 6h4v13H5z"/><path class="fg" d="M10 6h4v13h-4z"/><path class="b" d="M15.500 10l3-3M15.500 14l3-3M15.500 18l3-3M15.500 7v1M18.500 18v1"/></svg><div class="f combo dis"><span>ByColor</span><i><svg><use href="#chev"/></svg></i></div></div>
            <div class="row"><svg class="pi" viewBox="0 0 24 24"><g class="b" stroke-width="1.300" transform="rotate(-45 12 12)"><rect x="5" y="9.500" width="8" height="5" rx="2.500"/><rect x="11" y="9.500" width="8" height="5" rx="2.500"/></g></svg><div class="f"></div></div>
            <div class="row"><svg class="pi" viewBox="0 0 24 24"><path class="steel" d="M11 7l6 5-6 6-5-6z"/><path class="k" d="M11 11V6q-3-1-3 3"/><path class="fb" d="M17 12q4 5 0 6-4-1 0-6"/></svg><div class="f combo"><svg class="circ" viewBox="0 0 14 14"><circle cx="7" cy="7" r="5.300"/></svg><span>ByLayer</span><i><svg><use href="#chev"/></svg></i></div></div>
            <div class="row"><svg class="pi"><use href="#layers"/></svg><div class="f combo"><span>0</span><i><svg><use href="#chev"/></svg></i></div></div>
            <div class="row"><svg class="pi" viewBox="0 0 24 24"><path stroke="#555" d="M4 5.500h16"/><path stroke="#777" stroke-dasharray="4 1" d="M4 9.500h16M4 18.500h16"/><path stroke="#777" stroke-dasharray="3 1 1 1" d="M4 14.500h16"/></svg><div class="f combo"><span class="lt">ByLayer</span><span>Solid line</span><i><svg><use href="#chev"/></svg></i></div></div>
            <div class="row"><svg class="pi" viewBox="0 0 24 24"><path stroke="#444" stroke-dasharray="6 4" d="M4 5.500h16"/><path stroke="#555" stroke-dasharray="3 3" d="M4 10.500h16"/><path stroke="#555" stroke-dasharray="2 2" d="M4 14.500h16"/><path stroke="#444" stroke-dasharray="1 1" d="M4 18.500h16"/></svg><div class="f"><span>1</span></div></div>
            <div class="row"><svg class="pi" viewBox="0 0 24 24"><path class="fk" d="M5 5h14v4H5zM5 10.500h14v3H5zM5 15h14v2H5zM5 18h14v1H5z"/></svg><div class="f combo"><b class="line"></b><span>ByLayer</span><i><svg><use href="#chev"/></svg></i></div></div>
            <div class="row"><svg class="pi" viewBox="0 0 24 24"><path fill="#8fa5b5" stroke="none" d="M4 4h6v5H4zM14 4h6v5h-6zM9.500 9.500h5v5h-5zM4 14h6v5H4zM14 14h6v5h-6z"/></svg><div class="f"><span>ByLayer</span></div></div>
          </div>
          <div class="group"><h3>PrintStyle<s></s></h3>
            <div class="row"><svg class="pi" viewBox="0 0 24 24"><path fill="#c31b2b" stroke="none" d="M3 3h4v14H3z"/><path class="fg" d="M9 3h4v14H9z"/><path class="b" stroke-dasharray="2 1" d="M15 3v6M18 3v4"/><use href="#pen" x="3" y="2" width="19" height="19"/></svg><div class="f combo dis"><span>ByColor</span><i><svg><use href="#chev"/></svg></i></div></div>
            <div class="row"><svg class="pi" viewBox="0 0 24 24"><path fill="#fff" stroke="#555" d="M3.500 4.500h12v11h-12z"/><path class="b s2" d="M3 4h13"/><path class="rr s2" d="M6 7v7"/><path class="g s2" d="M9 7v7"/><use href="#pen" x="3" y="2" width="19" height="19"/></svg><div class="f combo"><span>None</span><i><svg><use href="#chev"/></svg></i></div></div>
            <div class="row"><svg class="pi" viewBox="0 0 24 24"><path fill="#c31b2b" stroke="none" d="M3 3h4v14l-4 3z"/><path class="fg" d="M9 3h4v9l-4 4z"/><path class="fb" d="M17 3h4l-5 5V5z"/><path class="k s15" d="M16 10.500h5M13 13.500h8M10 16.500h11"/><path class="k" stroke-width="2.500" d="M6 20h15"/></svg><div class="f ro"><span>None</span></div></div>
            <div class="row"><svg class="pi" viewBox="0 0 24 24"><circle cx="12" cy="12" r="9" stroke="#8cc0e0"/><path stroke="#557" d="M2 12h20"/><path stroke="#6cc04a" d="M12 6v12M10 8l2-2 2 2M10 16l2 2 2-2"/></svg><div class="f combo"><span>No</span><i><svg><use href="#chev"/></svg></i></div></div>
          </div>
          <div class="group"><h3>View<s></s></h3>
            <div class="row"><svg class="pi" viewBox="0 0 24 24"><path d="M14 20q-9 2-10-8 1-8 8-8 8 1 8 9"/><circle cx="12" cy="12" r="1.500" fill="#d7a61c" stroke="#d7a61c"/><path class="k" d="M16 15l3 5M19 15l-3 5"/></svg><div class="f ro"><span>202.5</span></div></div>
            <div class="row"><svg class="pi" viewBox="0 0 24 24"><path d="M14 20q-9 2-10-8 1-8 8-8 8 1 8 9"/><circle cx="12" cy="12" r="1.500" fill="#d7a61c" stroke="#d7a61c"/><path class="k" d="M16 15l1.500 3L19 15M17.500 18v3"/></svg><div class="f ro"><span>128.5</span></div></div>
            <div class="row"><svg class="pi" viewBox="0 0 24 24"><path d="M14 20q-9 2-10-8 1-8 8-8 8 1 8 9"/><circle cx="12" cy="12" r="1.500" fill="#d7a61c" stroke="#d7a61c"/><path class="k" d="M16 16h3l-3 4.500h3"/></svg><div class="f ro"><span>0</span></div></div>
            <div class="row"><svg class="pi" viewBox="0 0 24 24"><path d="M8 3.500h9M8 20.500h9"/><path class="b" d="M12.500 5v14M10.500 7.500l2-2 2 2M10.500 16.500l2 2 2-2"/></svg><div class="f ro"><span>311.85</span></div></div>
            <div class="row"><svg class="pi" viewBox="0 0 24 24"><path d="M3.500 7v9M20.500 7v9"/><path class="b" d="M5 11.500h14M7 9.500l-2 2 2 2M17 9.500l2 2-2 2"/></svg><div class="f ro"><span>441</span></div></div>
          </div>
          <div class="group"><h3>Misc<s></s></h3>
            <div class="row"><svg class="pi"></svg><div class="f combo"><i></i></div></div>
          </div>
        </div>
        <div class="track"><s></s><div class="thumb"></div><s class="dn"></s></div>
      </div>
    </div>
    <div class="strip">
      <svg viewBox="0 0 22 60" width="22" height="60"><path class="k s2" d="M7 6l7 7M14 6l-7 7"/><path class="fk" d="M7 28h9v2h-2v5l3 1v2H6v-2l3-1v-5H7z"/><path class="k" d="M11.500 38v4"/></svg>
      <span>Properties</span>
      <svg viewBox="0 0 12 12" width="12" height="12"><path class="fy" d="M1 1h3v4H1z"/><path class="fr" d="M5 1h3v4H5z"/><path class="fg" d="M9 1h2v4H9z"/><path d="M1 7.500h6M1 10.500h6M8.500 11V7h2v4M8.500 9h2"/></svg>
    </div>
  </aside>
</div>

<footer class="status">
  <span class="ver">CorelCAD 2019™ x64</span>
  <div class="sg g-a"><span class="w36">Snap</span><span class="w33">Grid</span><span class="w42">Ortho</span></div>
  <div class="sg g-b"><span class="on w38">Polar</span><span class="on w43">ESnap</span><span class="on w45">ETrack</span><span class="on w48">QInput</span><span class="w54">LWeight</span><span class="on w45">SHEET</span><span class="on w83">Dynamic CCS</span></div>
  <div class="sg g-c"><span class="ann">Annotation<s></s></span><em>(1:1)</em></div>
  <span class="coord">(328.93,290.9,0)</span>
  <span class="wm">© FileInfo.com</span>
  <svg class="rs" viewBox="0 0 14 14"><path class="fw" d="M11 2h2v2h-2zM11 6h2v2h-2zM11 10h2v2h-2zM7 6h2v2H7zM7 10h2v2H7zM3 10h2v2H3z"/></svg>
</footer>
</div>
</body>
</html>
```
FILE: styles.css
```css
* { box-sizing: border-box; }
body { margin: 0; background: #f0f0f0; overflow: hidden; }
.defs { position: absolute; }
.app { width: 1200px; height: 800px; border: 1px solid #1f427c; background: #f0f0f0; display: flex; flex-direction: column; font: 12px "Open Sans", "Noto Sans", sans-serif; letter-spacing: -.2px; color: #111; white-space: nowrap; }
svg { fill: none; stroke: #484848; stroke-width: 1; flex: none; display: block; }
b, i, em { font-style: normal; font-weight: normal; }
s { text-decoration: none; }

/* shared icon paints */
.s15 { stroke-width: 1.25; }
.s2 { stroke-width: 1.8; }
.b { stroke: #1c92dc; }
.nb { stroke: #28719c; }
.g { stroke: #3aaa35; }
.k { stroke: #1c1c1c; }
.rr { stroke: #c8283a; }
.s { stroke: #444; stroke-width: 1; }
.fb { fill: #0d8ee0; stroke: none; }
.fg { fill: #3aaa35; stroke: none; }
.fy { fill: #fdc010; }
path.fy:not(.s) { stroke: none; }
.fr { fill: #c41728; stroke: none; }
.fk { fill: #222; stroke: none; }
.fw { fill: #fff; }
path.fw:not([class*=" "]):not([stroke]) { stroke: none; }
.fs { fill: #3f4549; stroke: none; }
.steel { fill: #9daebb; stroke: #333; }
.yd { fill: #f6c21c; stroke: #5a4a10; }

/* title and menu */
.top { height: 60px; display: flex; padding: 3px 0 0 3px; }
.logo { width: 38px; height: 38px; margin-top: 3px; }
.topmain { flex: 1; display: flex; flex-direction: column; }
.titlebar { height: 28px; display: flex; align-items: center; padding-left: 4px; }
.titlebar > svg { margin-top: -2px; }
.ic { width: 24px; height: 24px; margin: 0 1.500px; }
.ar { width: 10px; height: 24px; margin: 0 -.5px; }
.titlebar .more { margin-left: -3px; }
.title { font-size: 14.500px; letter-spacing: -.06px; color: #444; margin: 0 0 0 34px; flex: 1; }
.win { width: 60px; height: 24px; }
.titlebar .win { margin: -1px 4px 0 0; }
.menu .win { margin: -7px 2px 0 auto; }
.menu { height: 28px; display: flex; align-items: center; padding: 5px 0 0 13px; letter-spacing: -.1px; }
.menu u { text-decoration-thickness: 1px; text-underline-offset: 2px; }
.m1 { width: 35px; } .m2 { width: 37px; } .m3 { width: 42px; } .m4 { width: 46px; } .m5 { width: 55px; } .m6 { width: 74px; } .m7 { width: 44px; } .m8 { width: 55px; } .m9 { width: 76px; } .m10 { width: 46px; } .m11 { width: 48px; } .m12 { width: 61px; } .m13 { width: 30px; }

/* combo boxes */
.combo { display: flex; align-items: center; height: 20px; background: #fff; border: 1px solid #9b9ba0; font: 11px "DejaVu Sans Condensed", sans-serif; letter-spacing: -.4px; padding-left: 3px; flex: none; }
.combo i { width: 17px; height: 100%; background: #e1e1e1; border: 1px solid #adadad; margin-left: auto; display: flex; align-items: center; justify-content: center; flex: none; }
.combo i svg { width: 14px; height: 16px; }
.classic { width: 181px; height: 21px; font: 12px "Open Sans", sans-serif; letter-spacing: -.2px; }
.circ { width: 14px; height: 14px; margin-right: 3px; }
.line { width: 32px; height: 1px; background: #000; margin: 0 2px 0 1px; }
.lt { width: 54px; }
.dis { background: #efefef; border-color: #a8a8ac; color: #808080; box-shadow: inset 0 0 0 1px #cfe0f0; }
.dis i { background: #cfcfcf; }
.dis i svg { stroke: #a0a0a0; }

/* toolbars */
.bar { height: 30px; display: flex; align-items: center; border-top: 1px solid #fff; border-bottom: 1px solid #a5a5a5; margin: 0 2px; padding-left: 1px; }
.bar .sep { width: 1px; height: 22px; background: #999; margin: 0 2.500px; }
.bar .sep.tall { height: 28px; margin-right: 3px; }
.grip { width: 3px; height: 26px; border-left: 2px dotted #b9b9b9; margin: 0 3px 0 2px; }
.g2 { margin: 0 1px; }
.layer { width: 300px; }
.licons { margin-right: 4px; }
.c117 { width: 117px; padding-left: 2px; }
.bar2 .g2 { margin-right: 2px; }

/* main area */
.main { height: 615px; display: flex; padding-left: 2px; }
.tools { width: 31px; border-right: 1px solid #9c9c9c; border-bottom: 1px solid #9c9c9c; display: flex; flex-direction: column; align-items: center; flex: none; }
.hgrip { width: 26px; height: 3px; border-top: 2px dotted #b9b9b9; margin: 4px 0 3px; }
.tl { width: 24px; height: 24px; margin: 1px 0; }
.hsep { width: 23px; height: 1px; background: #8d8d8d; margin: 3px 0 2px; }
.expand { width: 24px; height: 24px; margin-top: 16px; }
.doc { width: 799px; display: flex; flex-direction: column; flex: none; }
.doctabs { height: 29px; display: flex; width: 797px; border-top: 1px solid #a3a3a3; border-bottom: 1px solid #a3a3a3; background: #fff; align-items: flex-start; }
.doctab { width: 198px; height: 27px; padding: 0 12px 2px 22px; display: flex; align-items: center; font: 11px "DejaVu Sans Condensed", sans-serif; letter-spacing: -.05px; }
.doctab svg { width: 14px; height: 14px; margin: -2px 0 0 auto; }
.plus { width: 27px; height: 22px; background: #e1e1e1; border: 1px solid #a8a8a8; display: flex; align-items: center; justify-content: center; }
.plus svg { width: 14px; height: 14px; }
.rest { flex: 1; height: 23px; background: #f0f0f0; border-bottom: 1px solid #aaa; border-right: 1px solid #aaa; }
.canvas { width: 798px; height: 571px; background: #dcdcdc; padding: 17px 0 0 17px; border-left: 1px solid #a3a3a3; }
.sheet { width: 761px; height: 537px; shape-rendering: crispEdges; }
.ink { stroke: #000; }
.ucs { stroke: #00f; }
.cad { stroke: #000; stroke-width: 3; }
.cad .cy { stroke: #0ff; }
.cad .mg { stroke: #f0f; }
.cad .gr { stroke: #0c0; }
.cad .rd { stroke: #e11; }
.cad .rb { stroke: #300; }
.cad .yl { stroke: #ffea00; }
.cad .bold { stroke-width: 5; }
.sheettabs { height: 15px; display: flex; position: relative; align-items: center; }
.tabshape { position: absolute; left: 0; top: 0; width: 200px; height: 15px; }
.sheettabs span { position: relative; text-align: center; font-size: 11.500px; line-height: 15px; }
.sheettabs .a { width: 57px; }
.sheettabs .bld { width: 71px; font-weight: bold; font-size: 12px; }
.sheettabs .c { width: 68px; }
.sheettabs i { width: 21px; height: 12px; border: 1px solid #aaa; background: #e9e9e9; margin-left: 9px; font-size: 16px; line-height: 9px; text-align: center; color: #444; }

/* properties */
.props { width: 300px; display: flex; border-left: 2px solid #8f8f94; border-top: 1px solid #9b9b9b; border-bottom: 1px solid #9b9b9b; margin: 0 0 0 1px; flex: none; }
.panel { width: 274px; padding: 11px 0 0 11px; flex: none; }
.nosel { width: 253px; height: 20px; letter-spacing: -.25px; padding-left: 2px; }
.btns { display: flex; gap: 8px; padding: 5px 0 7px 1px; }
.btns button { width: 25px; height: 25px; padding: 0; border: 1px solid #adadad; background: #e1e1e1; display: flex; align-items: center; justify-content: center; }
.btns svg { width: 22px; height: 22px; }
.btns .q { font: bold 16px "Open Sans", sans-serif; color: #222; }
.scroll { width: 253px; height: 534px; border: 1px solid #a0a0a0; display: flex; overflow: hidden; padding: 10px 0 0 9px; }
.groups { width: 216px; height: 522px; overflow: hidden; display: flex; flex-direction: column; gap: 6px; flex: none; }
.group { border: 1px solid #dcdcdc; border-top: 0; display: flex; flex-direction: column; gap: 2px; flex: none; }
.group h3 { margin: 0 0 11px; height: 20px; background: #dfe4ff; border: 1px solid #a5a5ad; font: bold 11px "DejaVu Sans Condensed", sans-serif; letter-spacing: 0; line-height: 19px; padding: 0 5px 0 4px; display: flex; justify-content: space-between; align-items: center; }
s { width: 0; height: 0; border: 4.500px solid transparent; border-top: 0; border-bottom: 5px solid #000; }
.row { display: flex; align-items: center; height: 20px; justify-content: flex-end; gap: 8px; }
.pi { width: 24px; height: 24px; margin: -2px 0; }
.f { width: 175px; height: 20px; background: #fff; border: 1px solid #9b9ba0; padding-left: 2px; font: 11px/19px "DejaVu Sans Condensed", sans-serif; letter-spacing: -.3px; }
.f.dis { background: #efefef; }
.f.combo { padding-left: 1px; letter-spacing: -.4px; }
.f .circ { margin: 0 3px; }
.ro { background: #b0ceed; letter-spacing: -.15px; }
.track { width: 15px; margin-left: 11px; display: flex; flex-direction: column; align-items: center; height: 522px; flex: none; }
.thumb { width: 14px; height: 410px; background: #cdcdcd; margin-top: 5px; }
.track s { margin-top: -4px; }
.track s.dn { transform: rotate(180deg); margin: auto 0 4px; }
.strip { width: 24px; background: #c0c0c0; border-left: 1px solid #8b8b8b; border-right: 1px solid #8b8b8b; display: flex; flex-direction: column; align-items: center; padding-bottom: 5px; flex: none; }
.strip span { margin-top: auto; writing-mode: vertical-rl; transform: rotate(180deg); font: bold 11px "DejaVu Sans Condensed", sans-serif; letter-spacing: 0; margin-bottom: 8px; }

/* status bar */
.status { height: 33px; display: flex; align-items: center; padding-left: 4px; }
.ver { width: 244px; font-size: 11.500px; }
.sg { border: 1px solid #b5b5b5; height: 27px; display: flex; align-items: center; gap: 8px; padding-left: 2px; margin-right: 6px; margin-top: -2px; font-size: 11.500px; flex: none; }
.sg span { height: 19px; background: #e1e1e1; border: 1px solid #adadad; text-align: center; line-height: 17px; flex: none; }
.sg .on { background: #cce4f7; border-color: #00579c; }
.g-a { width: 134px; } .g-b { width: 411px; } .g-c { width: 128px; }
.w33 { width: 33px; } .w36 { width: 36px; } .w38 { width: 38px; } .w42 { width: 42px; } .w43 { width: 43px; } .w45 { width: 45px; } .w48 { width: 48px; } .w54 { width: 54px; } .w83 { width: 83px; }
.sg .ann { width: 94px; display: flex; justify-content: space-between; align-items: center; padding: 0 8px 0 3px; }
.ann s { transform: rotate(180deg); }
.sg em { margin-left: -2px; letter-spacing: -.3px; }
.coord { font-size: 11.500px; margin-left: 1px; letter-spacing: -.35px; }
.wm { margin-left: auto; margin-right: 23px; font: bold 12.500px "DejaVu Sans Condensed", sans-serif; color: #b2b2b2; }
.rs { width: 14px; height: 14px; margin-top: 18px; }
```
